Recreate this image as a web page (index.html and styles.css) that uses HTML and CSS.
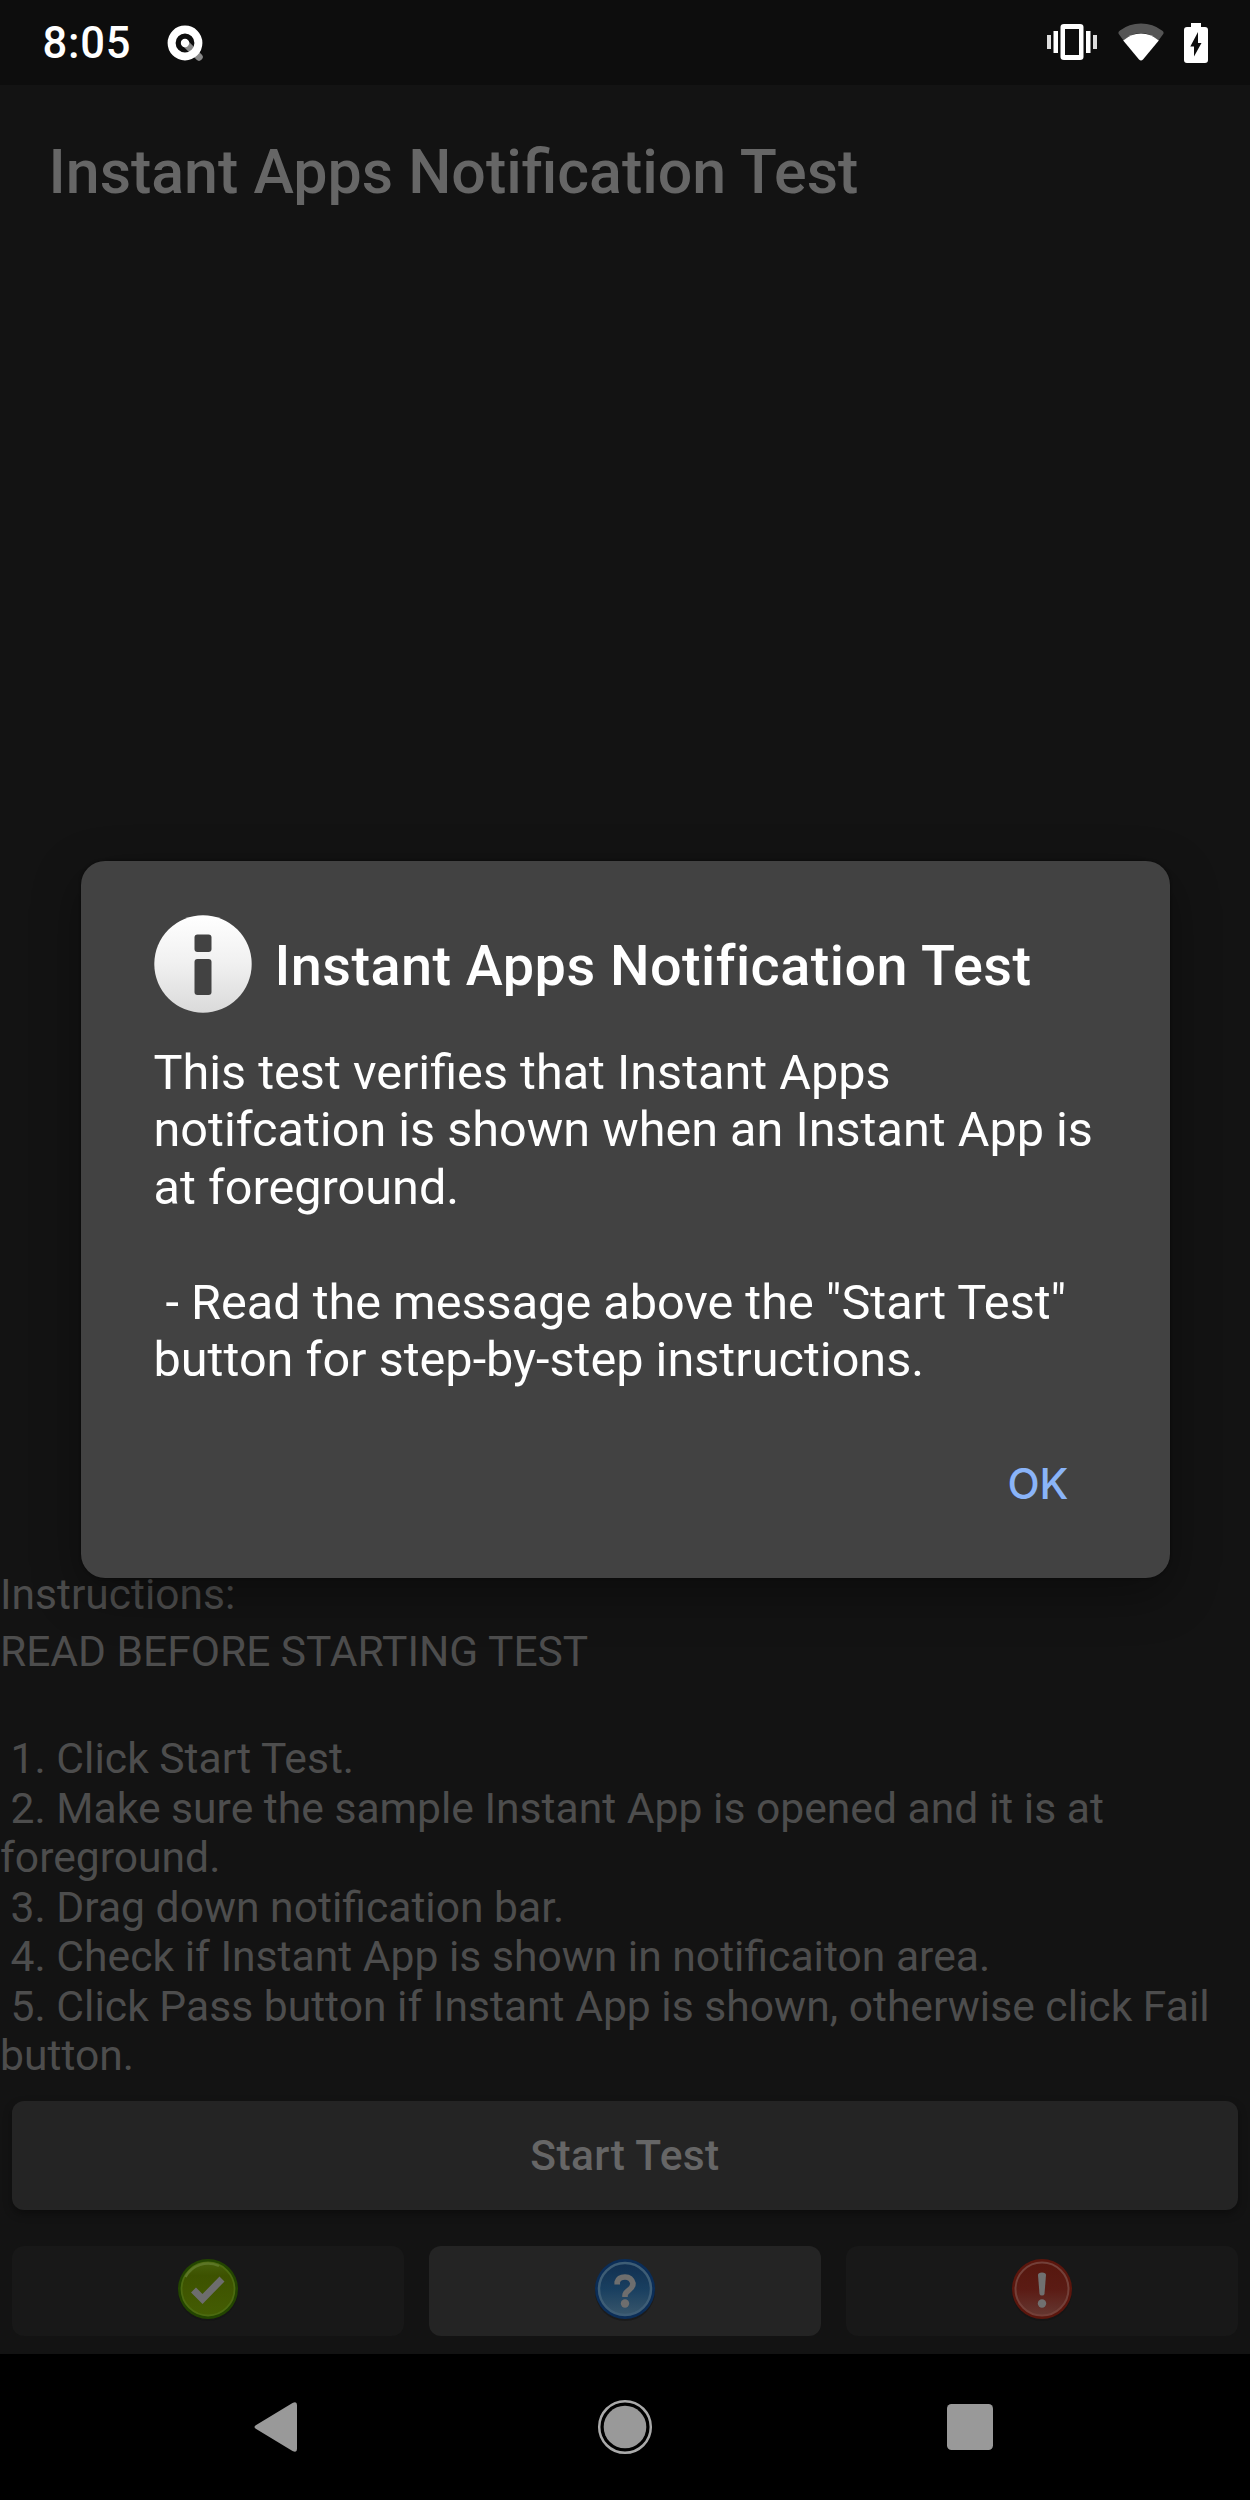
FILE: index.html
```html
<!DOCTYPE html>
<html lang="en">
<head>
<meta charset="utf-8">
<title>Instant Apps Notification Test</title>
<link rel="stylesheet" href="styles.css">
</head>
<body>
<div class="screen">
  <header class="status-bar">
    <div class="status-left">
      <span class="clock">8:05</span>
      <svg class="q-icon" width="36" height="36" viewBox="0 0 36 36">
        <path d="M18 18 32 32" stroke="#888" stroke-width="7.4" stroke-linecap="round"/>
        <circle cx="18" cy="18" r="13.4" fill="none" stroke="#fff" stroke-width="8"/>
        <circle cx="18" cy="18" r="4.2" fill="#fff"/>
      </svg>
    </div>
    <div class="status-right">
      <svg class="vibrate-icon" width="52" height="38" viewBox="0 0 52 38" fill="#fff">
        <path fill-rule="evenodd" d="M18 1H34Q37.500 1 37.500 4V34Q37.500 37 34 37H18Q14.500 37 14.500 34V4Q14.500 1 18 1ZM19 6V32H33V6Z"/>
        <path d="M7.500 8H12V30H7.500ZM40 8H44.500V30H40Z"/>
        <path d="M1 12H5V26H1ZM47 12H51V26H47Z" fill="#ddd"/>
      </svg>
      <svg class="wifi-icon" width="48" height="40" viewBox="0 0 48 40">
        <path fill="#555" d="M2.500 13Q0 10.500 3 8.500Q12 1.500 24 1.500T45 8.500Q48 10.500 45.500 13L41.500 18.500Q33 11 24 11T6.500 18.500Z"/>
        <path fill="#fff" d="M6.200 18.500Q14 11.500 24 11.500T41.800 18.500L26 37.500Q24 39.500 22 37.500Z"/>
      </svg>
      <svg class="battery-icon" width="26" height="42" viewBox="0 0 26 42">
        <path fill="#fff" d="M8 1H18V5H22Q25 5 25 8V38Q25 41 22 41H4Q1 41 1 38V8Q1 5 4 5H8Z"/>
        <path fill="#0d0d0d" d="M15 10V21H18.500L11 34.500V24.500H7.300Z"/>
      </svg>
    </div>
  </header>

  <div class="app-bar"><h1 class="app-title">Instant Apps Notification Test</h1></div>

  <main class="content">
    <div class="intro">Instructions:<br>READ BEFORE STARTING TEST</div>
    <div class="steps"> 1. Click Start Test.
 2. Make sure the sample Instant App is opened and it is at
foreground.
 3. Drag down notification bar.
 4. Check if Instant App is shown in notificaiton area.
 5. Click Pass button if Instant App is shown, otherwise click Fail
button.</div>
    <div class="start-button">Start Test</div>
    <div class="verdict-row">
      <div class="verdict disabled">
        <svg width="64" height="66" viewBox="0 0 64 66">
          <defs><linearGradient id="pass" x2="0" y2="1"><stop offset="0" stop-color="#465f0b"/><stop offset=".25" stop-color="#3d5200"/><stop offset="1" stop-color="#445d03"/></linearGradient></defs>
          <ellipse cx="32" cy="34" rx="30" ry="30" fill="#111" opacity=".5"/>
          <circle cx="32" cy="32" r="30" fill="#234500"/>
          <circle cx="32" cy="32" r="26.500" fill="url(#pass)" stroke="#4c6a10" stroke-width="1.800"/>
          <path d="M9.500 20A25.500 25.500 0 0 1 43 9" fill="none" stroke="#5c7526" stroke-width="2.400"/>
          <path d="M17.500 33 26.500 42 46 22" fill="none" stroke="#6d6d6d" stroke-width="7"/>
        </svg>
      </div>
      <div class="verdict info">
        <svg width="64" height="66" viewBox="0 0 64 66">
          <defs><linearGradient id="help" x2="0" y2="1"><stop offset="0" stop-color="#112f50"/><stop offset=".5" stop-color="#193f60"/><stop offset="1" stop-color="#38566b"/></linearGradient></defs>
          <ellipse cx="32" cy="34" rx="30" ry="30" fill="#151515" opacity=".6"/>
          <circle cx="32" cy="32" r="30" fill="#0b2d57"/>
          <circle cx="32" cy="32" r="26" fill="url(#help)" stroke="#3e5d75" stroke-width="2.500"/>
          <path d="M24.200 27.500V25Q25.500 20 32 20T40 26.500Q40 30 36 33T32 38.500V40" fill="none" stroke="#6e6e6e" stroke-width="5.600"/>
          <circle cx="32" cy="46.500" r="4.200" fill="#6e6e6e"/>
        </svg>
      </div>
      <div class="verdict disabled">
        <svg width="64" height="66" viewBox="0 0 64 66">
          <defs><linearGradient id="fail" x2="0" y2="1"><stop offset="0" stop-color="#56170e"/><stop offset=".5" stop-color="#5b1b14"/><stop offset="1" stop-color="#653731"/></linearGradient></defs>
          <ellipse cx="32" cy="34" rx="30" ry="30" fill="#111" opacity=".5"/>
          <circle cx="32" cy="32" r="30" fill="#5b160d"/>
          <circle cx="32" cy="32" r="26.500" fill="url(#fail)" stroke="#734039" stroke-width="2"/>
          <path d="M28 18Q28 15.500 32 15.500T36 18L34.500 37Q34 38.500 32 38.500T29.500 37Z" fill="#707070"/>
          <circle cx="32" cy="46.500" r="4.200" fill="#707070"/>
        </svg>
      </div>
    </div>
  </main>

  <nav class="nav-bar">
    <svg width="46" height="54" viewBox="0 0 46 54"><path d="M4 24.500 39.500 3Q44 .800 44 5V49Q44 53.200 39.500 51L4 29.500Q-1 27 4 24.500Z" fill="#999"/></svg>
    <svg class="nav-home" width="56" height="56" viewBox="0 0 56 56"><circle cx="28" cy="28" r="25.800" fill="none" stroke="#aaa" stroke-width="2.500"/><circle cx="28" cy="28" r="21.300" fill="#999"/></svg>
    <svg width="46" height="46" viewBox="0 0 46 46"><rect width="46" height="46" rx="4.500" fill="#999"/></svg>
  </nav>

  <section class="dialog" role="dialog">
    <div class="dialog-head">
      <svg width="98" height="98" viewBox="0 0 98 98">
        <defs><linearGradient id="sheen" x2="0" y2="1"><stop offset="0" stop-color="#fff"/><stop offset=".5" stop-color="#f0f0f0"/><stop offset="1" stop-color="#dadada"/></linearGradient></defs>
        <circle cx="49" cy="49" r="48.700" fill="url(#sheen)"/>
        <rect x="40.500" y="19.500" width="17" height="17.500" rx="3" fill="#424242"/>
        <rect x="40.500" y="44" width="17" height="36" rx="3" fill="#424242"/>
      </svg>
      <h2 class="dialog-title">Instant Apps Notification Test</h2>
    </div>
    <p class="message">This test verifies that Instant Apps
notifcation is shown when an Instant App is
at foreground.

 - Read the message above the "Start Test"
button for step-by-step instructions.</p>
    <div class="actions"><span class="ok">OK</span></div>
  </section>
</div>
</body>
</html>
```
FILE: styles.css
```css
* { box-sizing: border-box; }

body {
  margin: 0;
  background: #131313;
  font-family: Roboto, "Liberation Sans", sans-serif;
}

svg { display: block; flex: none; }

.screen {
  position: relative;
  display: flex;
  flex-direction: column;
  width: 1250px;
  height: 2500px;
  overflow: hidden;
}

.status-bar {
  display: flex;
  justify-content: space-between;
  height: 84.500px;
  padding: 0 41px 0 42.500px;
  background: #0d0d0d;
}

.status-left,
.status-right { display: flex; }

.clock {
  width: 124.500px;
  padding-top: 18px;
  font-size: 43.500px;
  line-height: 52px;
  font-weight: 500;
  letter-spacing: 0.800px;
  color: #fff;
  white-space: nowrap;
}

.q-icon { margin-top: 25px; }
.vibrate-icon { margin-top: 23px; }
.wifi-icon { margin: 22px 0 0 19px; }
.battery-icon { margin: 22px 0 0 18.500px; }

.app-bar {
  display: flex;
  align-items: center;
  height: 170.500px;
  padding: 7px 0 0 48.500px;
  background: #131313;
}

.app-title {
  margin: 0;
  font-size: 60.900px;
  font-weight: 500;
  line-height: 72px;
  color: #666;
}

.content {
  flex: 1;
  display: flex;
  flex-direction: column;
  justify-content: flex-end;
  padding: 0 12px 18px;
}

.intro,
.steps {
  margin: 0 -12px;
  font-size: 42.530px;
  color: #4d4d4d;
  white-space: pre;
}

.intro {
  margin-bottom: 54px;
  line-height: 57px;
}

.steps {
  font-size: 42.640px;
  line-height: 49.450px;
}

.start-button {
  height: 109px;
  margin: 20.500px 0 36px;
  border-radius: 12px;
  background: #242424;
  box-shadow: 0 4px 8px rgba(0, 0, 0, 0.350);
  color: #666;
  font-size: 42.530px;
  font-weight: 500;
  line-height: 109px;
  letter-spacing: 0.400px;
  text-align: center;
}

.verdict-row {
  display: grid;
  grid-template-columns: repeat(3, 1fr);
  gap: 25px;
}

.verdict {
  display: flex;
  justify-content: center;
  height: 90px;
  padding-top: 11px;
  border-radius: 12px;
}

.disabled { background: #181818; }
.info { background: #242424; }

.nav-bar {
  display: flex;
  align-items: center;
  justify-content: space-between;
  height: 146px;
  padding: 0 257px 0 253px;
  background: #000;
}

.nav-home { margin-left: 4px; }

.dialog {
  position: absolute;
  top: 861px;
  left: 80.500px;
  width: 1089px;
  height: 717px;
  padding: 54px 73px;
  border-radius: 24px;
  background: #424242;
  box-shadow: 0 16px 48px rgba(0, 0, 0, 0.350), 0 0 3px rgba(0, 0, 0, 0.500);
  color: #fff;
}

.dialog-head {
  display: flex;
  align-items: center;
  gap: 23px;
  height: 98px;
}

.dialog-title {
  margin: 0;
  padding-top: 3px;
  font-size: 55.800px;
  font-weight: 500;
  line-height: 66px;
  letter-spacing: 0.450px;
  font-variant-ligatures: common-ligatures;
  white-space: nowrap;
}

.message {
  margin: 31px 0 0;
  font-size: 48.600px;
  line-height: 57.400px;
  white-space: pre;
}

.actions {
  display: flex;
  justify-content: flex-end;
  margin-top: 66px;
  padding-right: 28px;
}

.ok {
  font-family: Inter, Roboto, sans-serif;
  font-size: 42px;
  font-weight: 500;
  line-height: 60px;
  color: #8ab4f8;
}
```
